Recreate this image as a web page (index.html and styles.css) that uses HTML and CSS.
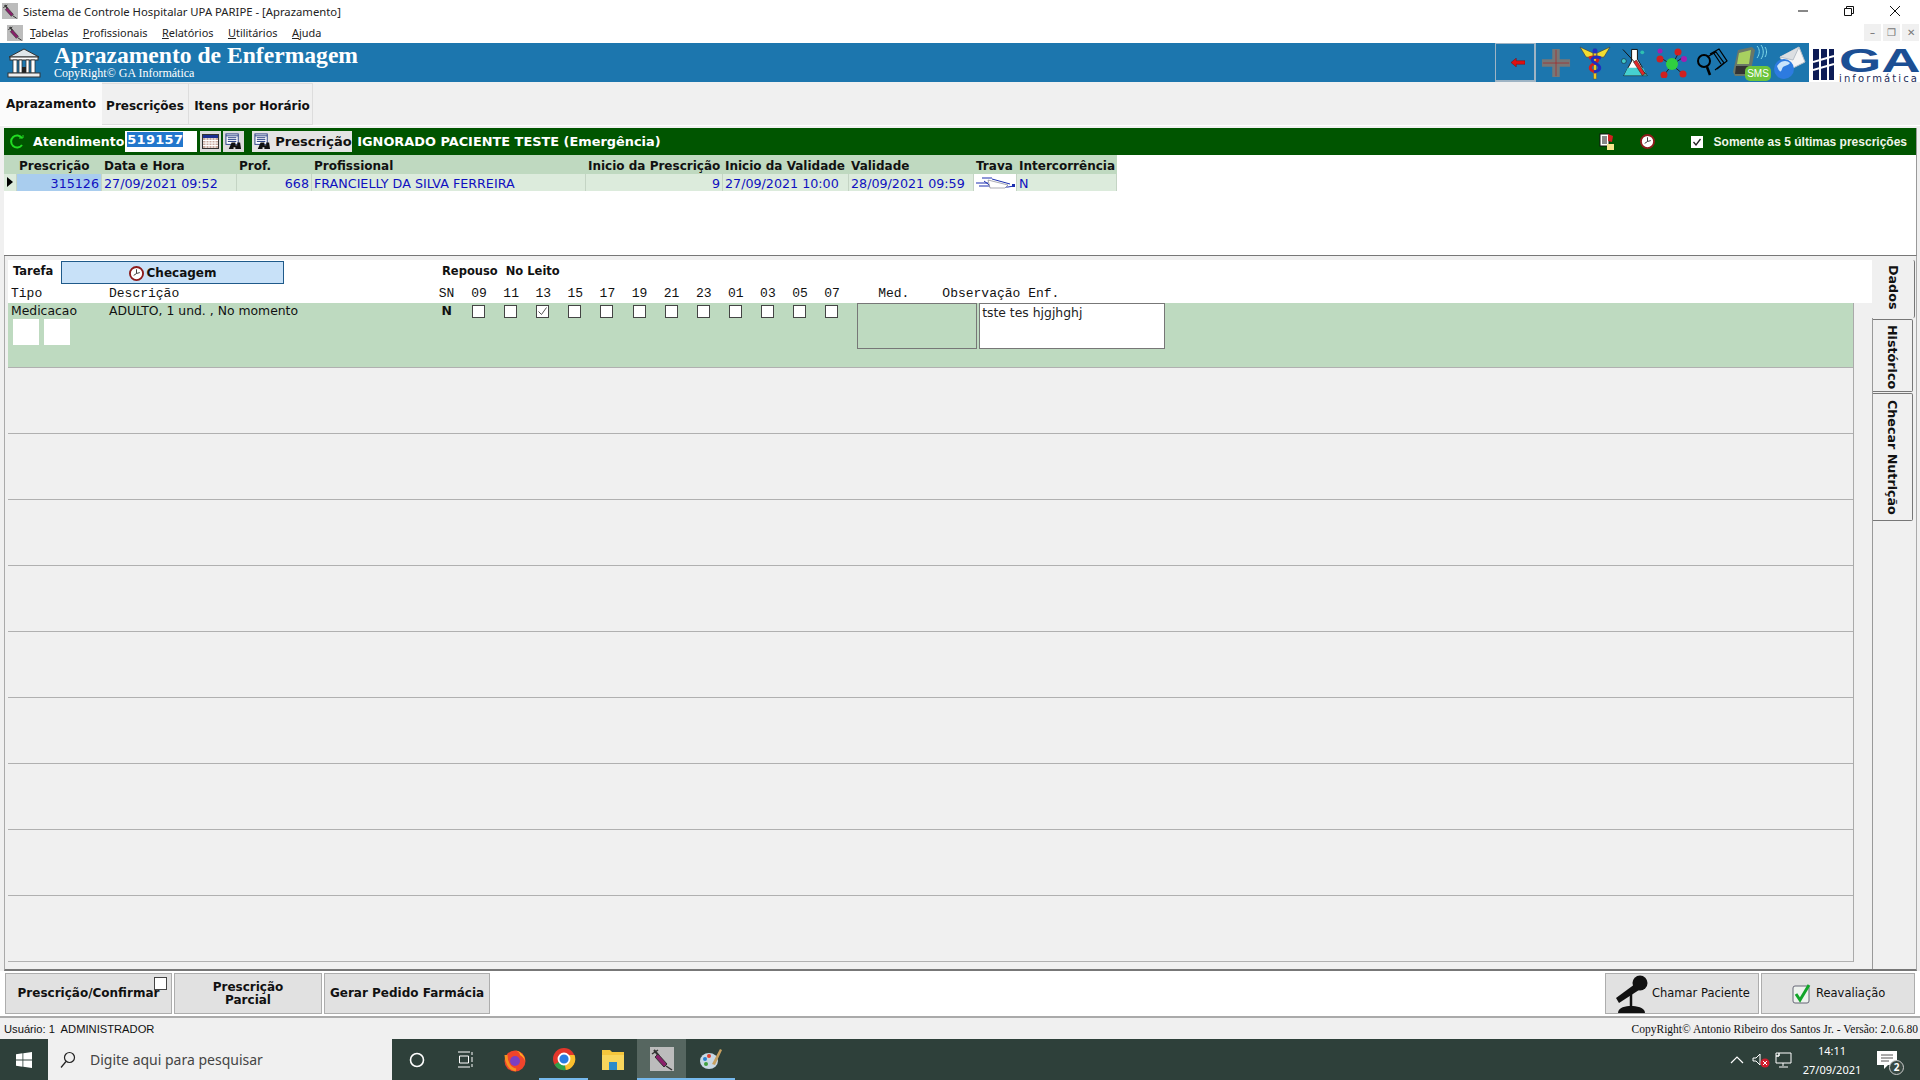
FILE: index.html
```html
<!DOCTYPE html>
<html>
<head>
  <title>Sistema de Controle Hospitalar UPA PARIPE - [Aprazamento]</title>
  <meta charset="UTF-8">
  <link rel="stylesheet" href="styles.css">
</head>
<body>
  <svg class="hidden" width="0" height="0">
    <defs>
      <symbol id="syringe" viewBox="0 0 24 24">
        <rect width="24" height="24" fill="#bcbcbc"/>
        <path d="M4 3l5 6" stroke="#333" stroke-width="2"/>
        <path d="M2 7l6-4" stroke="#333" stroke-width="1.5"/>
        <path d="M8 7l9 10-3 3-9-10z" fill="#8a1f6a" stroke="#333"/>
        <path d="M16 19l6 4" stroke="#333" stroke-width="1.5"/>
      </symbol>
      <symbol id="clock" viewBox="0 0 16 16">
        <circle cx="8" cy="8" r="7" fill="#fff" stroke="#8c1c1c" stroke-width="2"/>
        <path d="M8 3.500V8l-3 2M8 8l3.500-1" stroke="#333" stroke-width="1" fill="none"/>
      </symbol>
      <symbol id="binoc" viewBox="0 0 18 18">
        <rect x="1" y="1" width="13" height="11" fill="#fff" stroke="#223a80"/>
        <path d="M1 3h13M3 5h9M3 7h9M3 9h9" stroke="#223a80"/>
        <path d="M7 10h4v3h2v-3h3l1 7h-6v-2H9v2H4z" fill="#111"/>
      </symbol>
    </defs>
  </svg>

  <div class="title-bar">
    <svg class="app-icon" width="16" height="16"><use href="#syringe"/></svg>
    <span class="title-text">Sistema de Controle Hospitalar UPA PARIPE - [Aprazamento]</span>
    <div class="win-btns">
      <svg width="46" height="20" viewBox="0 0 46 20"><path d="M18 10h10" stroke="#111"/></svg>
      <svg width="46" height="20" viewBox="0 0 46 20"><path d="M18.500 7.500h7v7h-7zM20.500 7.500v-2h7v7h-2" stroke="#111" fill="none"/></svg>
      <svg width="46" height="20" viewBox="0 0 46 20"><path d="M18 5l10 10M28 5L18 15" stroke="#111"/></svg>
    </div>
  </div>

  <div class="menu-bar">
    <svg class="menu-icon" width="16" height="16"><use href="#syringe"/></svg>
    <span><u>T</u>abelas</span>
    <span><u>P</u>rofissionais</span>
    <span><u>R</u>elatórios</span>
    <span><u>U</u>tilitários</span>
    <span><u>A</u>juda</span>
    <div class="mdi-btns">
      <span class="mdi-btn">&#8211;</span>
      <span class="mdi-btn">&#10064;</span>
      <span class="mdi-btn">&#10005;</span>
    </div>
  </div>

  <header class="blue-head">
    <svg class="bank-icon" width="34" height="32" viewBox="0 0 34 32">
      <path d="M2 10L17 2l15 8z" fill="#dfe6ea" stroke="#333"/>
      <rect x="3" y="10" width="28" height="3" fill="#fff" stroke="#333"/>
      <path d="M6 13h4v13H6zM12 13h3v13h-3zM19 13h3v13h-3zM24 13h4v13h-4z" fill="#fff" stroke="#333" stroke-width=".8"/>
      <rect x="15" y="20" width="4" height="6" fill="#222"/>
      <rect x="1" y="26" width="32" height="4" fill="#eee" stroke="#333"/>
    </svg>
    <div class="head-titles">
      <div class="head-main">Aprazamento de Enfermagem</div>
      <div class="head-sub">CopyRight© GA Informática</div>
    </div>
    <div class="head-tools">
      <div class="back-btn">
        <svg width="14" height="9" viewBox="0 0 16 10"><path d="M0 5l6-5v3h10v4H6v3z" fill="#e01010" stroke="#700" stroke-width=".5"/></svg>
      </div>
      <svg class="tool gap-7" width="30" height="30" viewBox="0 0 32 32"><path d="M12 1h8v11h11v8H20v11h-8V20H1v-8h11z" fill="#777"/><path d="M16 2v28M2 16h28" stroke="#b02020" stroke-width=".7"/></svg>
      <svg class="tool gap-7" width="34" height="34" viewBox="0 0 34 34">
        <path d="M15 7L2 1l6 10 7 1zM19 7l13-6-6 10-7 1z" fill="#f2dd30" stroke="#444" stroke-width=".7"/>
        <rect x="15.500" y="3" width="3" height="30" fill="#f0c820" stroke="#444" stroke-width=".4"/>
        <circle cx="17" cy="5" r="2.500" fill="#2030c0"/>
        <path d="M11 12c8-3 12 2 6 5s-7 7 1 9" fill="none" stroke="#d02020" stroke-width="3"/>
        <path d="M23 12c-8-3-12 2-6 5s7 7-1 9" fill="none" stroke="#1c2fc0" stroke-width="3"/>
      </svg>
      <svg class="tool gap-6" width="31" height="34" viewBox="0 0 32 34">
        <path d="M13 3h6v10l10 17H5L13 15z" fill="#fff" stroke="#111"/>
        <path d="M9 22h16l4 8H5z" fill="#46d0d0"/>
        <path d="M4 3l24 26" stroke="#111" stroke-width="1"/>
        <path d="M18 14l9 14-3 2-9-14z" fill="#e02828" stroke="#111" stroke-width=".5"/>
        <circle cx="24" cy="6" r="2" fill="#2ec0b0"/><circle cx="5" cy="15" r="2.500" fill="#40c8c8" stroke="#111" stroke-width=".5"/>
      </svg>
      <svg class="tool gap-7" width="32" height="30" viewBox="0 0 32 30">
        <path d="M5 10l11 7M22 6l-6 11M16 17l11 9M8 27l8-10M26 10l-10 7" stroke="#222"/>
        <circle cx="16" cy="16" r="6" fill="#30d040"/>
        <circle cx="4" cy="11" r="3.500" fill="#d02020"/><circle cx="22" cy="4" r="3.500" fill="#d02020"/>
        <circle cx="27" cy="26" r="3.500" fill="#d02020"/><circle cx="8" cy="27" r="3.500" fill="#d02020"/>
        <circle cx="28" cy="11" r="3" fill="#a020b0"/><circle cx="4" cy="3" r="2.500" fill="#a020b0"/>
      </svg>
      <svg class="tool gap-4" width="33" height="30" viewBox="0 0 33 30">
        <path d="M15 6l9-5 8 12-10 8M12 9l9-5 8 11-9 7M18 4l8 12" fill="none" stroke="#000" stroke-width="1.200"/>
        <circle cx="9" cy="13" r="6" fill="none" stroke="#000" stroke-width="2"/>
        <path d="M12 19l3 8" stroke="#000" stroke-width="2.500"/>
      </svg>
      <svg class="tool gap-2" width="39" height="38" viewBox="0 0 39 38">
        <path d="M6 6l14-3 3 3-5 26H3L1 28z" fill="#6a7768"/>
        <path d="M7 9l12-3-2 14H5z" fill="#a8d060"/>
        <path d="M4 22h13v8H3z" fill="#333"/>
        <path d="M25 2c3 3 3 8 0 12M29 1c3 4 3 10 0 14M33 3c2 3 2 7 0 10" fill="none" stroke="#7fd8e8"/>
        <rect x="13" y="22" width="26" height="15" rx="5" fill="#6cc43c"/>
        <text x="26" y="33" class="sms-label" text-anchor="middle">SMS</text>
      </svg>
      <svg class="tool gap-3" width="33" height="34" viewBox="0 0 33 34">
        <path d="M7 11L26 1l6 15-18 9z" fill="#f4f4f4" stroke="#b8c0c8"/>
        <path d="M7 11l13 3L26 1" fill="#dcdfe2" stroke="#b8c0c8"/>
        <circle cx="11" cy="23" r="10" fill="#2d7be0"/>
        <path d="M4 20c4-6 10-6 13-3-2 3-7 2-8 6s-3 3-5-3z" fill="#c9e4fb"/>
      </svg>
      <div class="ga-logo">
        <svg width="22" height="34" viewBox="0 0 22 34">
          <rect x="0" y="3" width="6" height="31" fill="#0d1c56"/>
          <rect x="8" y="3" width="6" height="31" fill="#0d1c56"/>
          <rect x="16" y="3" width="5" height="31" fill="#0d1c56"/>
          <path d="M0 16l21-6M0 24l21-6" stroke="#fff" stroke-width="2"/>
        </svg>
        <div class="ga-text">
          <div class="ga-mark">GA</div>
          <div class="ga-info">informática</div>
        </div>
      </div>
    </div>
  </header>

  <nav class="tabs">
    <div class="tab tab-on">Aprazamento</div>
    <div class="tab tab-prescr">Prescrições</div>
    <div class="tab tab-itens">Itens por Horário</div>
  </nav>

  <section class="frame">
    <div class="green-bar">
      <svg class="refresh" width="15" height="15" viewBox="0 0 15 15"><path d="M13 4A6 6 0 1 0 13 11" fill="none" stroke="#22dd22" stroke-width="2"/><path d="M10 4h4V1" fill="none" stroke="#22dd22"/></svg>
      <span class="atend-label">Atendimento</span>
      <span class="atend-input"><span class="selected">519157</span></span>
      <span class="icon-btn cal-btn">
        <svg width="17" height="15" viewBox="0 0 17 15"><rect x=".5" y=".5" width="16" height="14" fill="#c9a9a0" stroke="#333"/><rect x="1" y="1" width="15" height="3" fill="#1c2f90"/><path d="M1 6.500h15M1 9h15M1 11.500h15M4 4v10M7 4v10M10 4v10M13 4v10" stroke="#fff"/></svg>
      </span>
      <span class="icon-btn binoc-btn"><svg width="17" height="17"><use href="#binoc"/></svg></span>
      <span class="prescr-btn"><svg width="17" height="17"><use href="#binoc"/></svg>Prescrição</span>
      <span class="patient">IGNORADO PACIENTE TESTE (Emergência)</span>
      <div class="bar-right">
        <svg class="doc-icon" width="16" height="17" viewBox="0 0 16 17">
          <rect x="1" y="1" width="9" height="12" fill="#fff" stroke="#111"/>
          <path d="M3 4h5M3 6h5M3 8h5M3 10h5" stroke="#111"/>
          <path d="M9 1l5 2-1 6-4-1z" fill="#d02020"/>
          <rect x="8" y="11" width="7" height="6" fill="#f5e58c"/>
        </svg>
        <svg class="bar-clock" width="15" height="15"><use href="#clock"/></svg>
        <span class="only-check">
          <svg width="12" height="12" viewBox="0 0 12 12"><rect width="12" height="12" fill="#fff"/><path d="M2.500 6l2.500 3 4.500-6" fill="none" stroke="#222" stroke-width="1.300"/></svg>
        </span>
        <span class="only-label">Somente as 5 últimas prescrições</span>
      </div>
    </div>

    <div class="presc-grid">
      <div class="pg-row pg-head">
        <span></span><span class="ind-head">Prescrição</span><span>Data e Hora</span><span>Prof.</span><span>Profissional</span>
        <span class="narrow">Inicio da Prescrição</span><span class="narrow">Inicio da Validade</span><span class="narrow">Validade</span><span class="narrow">Trava</span><span class="narrow">Intercorrência</span>
      </div>
      <div class="pg-row pg-data">
        <span class="pointer"></span><span class="num sel-cell">315126</span><span>27/09/2021 09:52</span><span class="num">668</span><span>FRANCIELLY DA SILVA FERREIRA</span>
        <span class="num">9</span><span>27/09/2021 10:00</span><span>28/09/2021 09:59</span>
        <span class="trava-cell">
          <svg width="42" height="15" viewBox="0 0 42 15"><path d="M2 8h12M8 3h10M5 11h14M10 6l8 6h16l6-1M18 4l18 5" stroke="#1c2fb0" fill="none"/><path d="M14 5l20 5-3 3H16z" fill="#fff" stroke="#556" stroke-width=".5"/><rect x="38" y="9" width="3" height="3" fill="#1c2fb0"/></svg>
        </span>
        <span>N</span>
      </div>
    </div>
  </section>

  <section class="work">
    <div class="work-main">
      <div class="task-head">
        <div class="task-line">
          <span class="task-label">Tarefa</span>
          <span class="check-btn"><svg width="15" height="15"><use href="#clock"/></svg>Checagem</span>
          <span class="rep-label">Repouso</span>
          <span class="leito-label">No Leito</span>
        </div>
        <div class="col-line row-grid">
          <span>Tipo</span><span>Descrição</span><span class="center">SN</span>
          <span class="center">09</span><span class="center">11</span><span class="center">13</span><span class="center">15</span><span class="center">17</span><span class="center">19</span><span class="center">21</span><span class="center">23</span><span class="center">01</span><span class="center">03</span><span class="center">05</span><span class="center">07</span>
          <span class="med-head">Med.</span><span class="obs-head">Observação Enf.</span>
        </div>
      </div>

      <div class="rows">
        <div class="item row-grid item-on">
          <div class="tipo">Medicacao
            <div class="white-boxes"><span></span><span></span></div>
          </div>
          <div>ADULTO, 1 und. , No momento</div>
          <div class="center sn">N</div>
          <div class="center"><span class="chk"></span></div>
          <div class="center"><span class="chk"></span></div>
          <div class="center"><span class="chk chk-on"><svg width="11" height="11" viewBox="0 0 11 11"><path d="M1.500 5.500l3 3 5-7" fill="none" stroke="#555"/></svg></span></div>
          <div class="center"><span class="chk"></span></div>
          <div class="center"><span class="chk"></span></div>
          <div class="center"><span class="chk"></span></div>
          <div class="center"><span class="chk"></span></div>
          <div class="center"><span class="chk"></span></div>
          <div class="center"><span class="chk"></span></div>
          <div class="center"><span class="chk"></span></div>
          <div class="center"><span class="chk"></span></div>
          <div class="center"><span class="chk"></span></div>
          <div class="med-box"></div>
          <div class="obs-box">tste tes hjgjhghj</div>
        </div>
        <div class="item"></div>
        <div class="item"></div>
        <div class="item"></div>
        <div class="item"></div>
        <div class="item"></div>
        <div class="item"></div>
        <div class="item"></div>
        <div class="item"></div>
        <div class="item"></div>
      </div>
    </div>

    <aside class="side-tabs">
      <div class="side-tab side-on"><span>Dados</span></div>
      <div class="side-tab side-hist"><span>Histórico</span></div>
      <div class="side-tab side-nutri"><span>Checar Nutrição</span></div>
    </aside>
  </section>

  <section class="actions">
    <button class="act act-confirm">Prescrição/Confirmar<span class="mini-chk"></span></button>
    <button class="act act-parcial">Prescrição<br>Parcial</button>
    <button class="act act-pedido">Gerar Pedido Farmácia</button>
    <button class="act act-plain act-chamar">
      <svg width="34" height="39" viewBox="0 0 34 39">
        <path d="M1 24l19-14 4 6L4 29z" fill="#111"/>
        <circle cx="25" cy="9" r="7.500" fill="#111"/>
        <path d="M16 20v13" stroke="#111" stroke-width="2.500"/>
        <path d="M3 39c0-6 8-7 13-7s14 1 14 7z" fill="#111"/>
      </svg>
      <span>Chamar Paciente</span>
    </button>
    <button class="act act-plain act-reav">
      <svg width="22" height="22" viewBox="0 0 22 22">
        <rect x="2" y="3" width="16" height="17" rx="2" fill="#eef2ee" stroke="#667"/>
        <path d="M5 11l4 6 9-15" fill="none" stroke="#12a52a" stroke-width="3"/>
      </svg>
      <span>Reavaliação</span>
    </button>
  </section>

  <footer class="status">
    <span class="status-user">Usuário: 1&nbsp; ADMINISTRADOR</span>
    <span class="status-copy">CopyRight© Antonio Ribeiro dos Santos Jr. - Versão: 2.0.6.80</span>
  </footer>

  <div class="taskbar">
    <svg class="win-logo" width="16" height="16" viewBox="0 0 16 16"><path d="M0 2.200l6.500-.9v6.300H0zM7.300 1.200L16 0v7.600H7.300zM0 8.400h6.500v6.300L0 13.800zM7.300 8.400H16V16l-8.700-1.200z" fill="#fff"/></svg>
    <div class="search-box">
      <svg width="17" height="17" viewBox="0 0 17 17"><circle cx="10.500" cy="6.500" r="5" fill="none" stroke="#222" stroke-width="1.200"/><path d="M7 10.500l-5 6" stroke="#222" stroke-width="1.200"/></svg>
      <span>Digite aqui para pesquisar</span>
    </div>
    <div class="task-slot"><svg width="16" height="16" viewBox="0 0 16 16"><circle cx="8" cy="8" r="6.500" fill="none" stroke="#fff" stroke-width="1.600"/></svg></div>
    <div class="task-slot"><svg width="17" height="17" viewBox="0 0 17 17"><path d="M1 1h12M1 16h12M15 1v3M15 6v5M15 13v3M2.500 5h9v7h-9z" fill="none" stroke="#fff"/></svg></div>
    <div class="task-slot"><svg width="24" height="24" viewBox="0 0 24 24"><circle cx="12" cy="13" r="10.500" fill="#f0442c"/><path d="M12 2c6 2 10 6 10 11-1-3-3-5-5-6 0-2-2-4-5-5z" fill="#ffb020"/><circle cx="12" cy="13" r="5" fill="#7b3fc4"/><path d="M3 7c0 6 3 14 10 15" fill="none" stroke="#f89020" stroke-width="3"/></svg></div>
    <div class="task-slot slot-run"><svg width="24" height="24" viewBox="0 0 24 24"><circle cx="12" cy="12" r="11" fill="#e3362b"/><path d="M12 12L2.500 17.500A11 11 0 0 0 14 23z" fill="#2fa14a"/><path d="M12 12l1.800 11A11 11 0 0 0 22.500 8H12z" fill="#fbc02d"/><circle cx="12" cy="12" r="5.500" fill="#2a7de1" stroke="#fff" stroke-width="1.800"/></svg></div>
    <div class="task-slot"><svg width="22" height="22" viewBox="0 0 22 22"><path d="M0 1h8l2 2h12v18H0z" fill="#f5c63c"/><rect x="0" y="6" width="22" height="15" fill="#f9d65c"/><rect x="7" y="13" width="8" height="8" fill="#2c8ac9"/></svg></div>
    <div class="task-slot slot-run slot-active"><svg width="24" height="24"><use href="#syringe"/></svg></div>
    <div class="task-slot slot-run"><svg width="24" height="24" viewBox="0 0 24 24"><ellipse cx="10" cy="14" rx="9" ry="8" fill="#c8d8e4"/><circle cx="6" cy="12" r="2" fill="#2a80d0"/><circle cx="10" cy="9" r="2" fill="#e04030"/><circle cx="7" cy="17" r="2" fill="#40a040"/><path d="M13 17L21 2l2 1-7 15z" fill="#c8a060"/></svg></div>
    <div class="tray">
      <svg width="14" height="8" viewBox="0 0 14 8"><path d="M1 7l6-6 6 6" fill="none" stroke="#fff" stroke-width="1.200"/></svg>
      <svg class="tray-sound" width="18" height="16" viewBox="0 0 18 16"><path d="M1 6h3l4-4v11L4 9H1z" fill="none" stroke="#fff"/><circle cx="13" cy="11" r="4.500" fill="#d01c2c"/><path d="M11 9l4 4M15 9l-4 4" stroke="#fff"/></svg>
      <svg class="tray-net" width="17" height="16" viewBox="0 0 17 16"><path d="M4 1h12v10H1V4h3zM1 1h3v3H1zM8 11v3M4 15h9" fill="none" stroke="#fff"/></svg>
      <div class="clock-text"><div>14:11</div><div>27/09/2021</div></div>
      <div class="notif">
        <svg width="22" height="20" viewBox="0 0 22 20"><path d="M1 1h20v14h-9l-4 4v-4H1z" fill="#fff"/><path d="M5 5h12M5 8h12M5 11h8" stroke="#555"/></svg>
        <span class="notif-count">2</span>
      </div>
    </div>
  </div>
</body>
</html>
```

FILE: styles.css
```css
* {
  box-sizing: border-box;
}
html, body {
  margin: 0;
  padding: 0;
}
body {
  width: 1920px;
  height: 1080px;
  overflow: hidden;
  background-color: #f0f0f0;
  color: #111;
  font-family: "Noto Sans", "Open Sans", sans-serif;
  font-size: 12px;
}
.hidden {
  position: absolute;
}
.center {
  text-align: center;
}

/* window title and menu */
.title-bar {
  height: 22px;
  background-color: #fff;
  display: flex;
  align-items: center;
  padding-left: 2px;
}
.app-icon {
  margin-right: 5px;
}
.title-text {
  font-size: 11.300px;
  color: #222;
}
.win-btns {
  margin-left: auto;
  display: flex;
  margin-right: 2px;
}
.menu-bar {
  height: 21px;
  background-color: #fff;
  display: flex;
  align-items: center;
  padding-left: 7px;
  font-size: 10.900px;
  color: #222;
}
.menu-icon {
  margin-right: 7px;
}
.menu-bar span {
  margin-right: 14.500px;
}
.mdi-btns {
  margin-left: auto;
  display: flex;
  gap: 2px;
  margin-right: 1px;
}
.menu-bar .mdi-btn {
  width: 17px;
  height: 17px;
  margin: 0;
  background-color: #f0f0f0;
  color: #777;
  font-size: 10px;
  text-align: center;
  line-height: 17px;
}

/* blue header */
.blue-head {
  height: 39px;
  background-color: #1c76ae;
  display: flex;
  align-items: center;
  position: relative;
  padding-left: 7px;
}
.bank-icon {
  margin-right: 13px;
}
.head-titles {
  margin-top: -2px;
  color: #fff;
  font-family: "Liberation Serif", serif;
  font-weight: bold;
}
.head-main {
  font-size: 23.600px;
  line-height: 22px;
  margin-bottom: 1px;
}
.head-sub {
  font-size: 12px;
  font-weight: normal;
  line-height: 13px;
}
.head-tools {
  margin-left: auto;
  display: flex;
  align-items: center;
  height: 39px;
}
.tool {
  flex: none;
}
.gap-7 {
  margin-right: 7px;
}
.gap-6 {
  margin-right: 6px;
}
.gap-4 {
  margin-right: 4px;
}
.gap-3 {
  margin-right: 3px;
}
.gap-2 {
  margin-right: 2px;
}
.back-btn {
  width: 41px;
  height: 39px;
  border: 1px solid #9fb4c4;
  border-right-width: 2px;
  border-bottom-width: 2px;
  display: flex;
  align-items: center;
  justify-content: center;
  padding-left: 6px;
  margin-right: 5px;
}
.sms-label {
  font-family: "Liberation Sans", sans-serif;
  font-size: 10px;
  fill: #fff;
}
.ga-logo {
  width: 111px;
  height: 39px;
  background-color: #fff;
  display: flex;
  align-items: flex-start;
  padding: 3px 0 0 4px;
  gap: 4px;
}
.ga-mark {
  font-family: "Liberation Sans", sans-serif;
  font-weight: bold;
  font-size: 34px;
  line-height: 28px;
  height: 27px;
  width: 80px;
  color: #1c4f94;
  transform: scaleX(1.600);
  transform-origin: left;
}
.ga-info {
  font-family: "DejaVu Sans", sans-serif;
  font-size: 10px;
  letter-spacing: 2.100px;
  line-height: 11px;
  white-space: nowrap;
  color: #1d2d5a;
}

/* tabs */
.tabs {
  height: 44px;
  display: flex;
  font-family: "DejaVu Sans", sans-serif;
  font-weight: bold;
  font-size: 12px;
  border-bottom: 1px solid #fff;
}
.tab {
  border: 1px solid #ddd;
  border-left: none;
  margin-top: 1px;
  padding-top: 15px;
  text-align: center;
}
.tab-on {
  width: 102px;
  background-color: #fbfbfb;
  border: none;
  padding-top: 15px;
  margin-top: 0;
}
.tab-prescr {
  width: 87px;
}
.tab-itens {
  width: 124px;
  padding-left: 3px;
}

/* atendimento bar and prescriptions */
.frame {
  margin: 2px 3px 0 4px;
  height: 128px;
  background-color: #fff;
  border-right: 1px solid #999;
  border-bottom: 1px solid #777;
}
.green-bar {
  height: 27px;
  background-color: #005500;
  color: #fff;
  display: flex;
  align-items: center;
  padding-left: 5px;
  font-family: "DejaVu Sans", sans-serif;
  font-weight: bold;
  font-size: 12.500px;
}
.refresh {
  margin-right: 9px;
}
.atend-input {
  width: 72px;
  height: 21px;
  background-color: #fff;
  margin-left: 1px;
  padding: 1px 0 0 2px;
  font-size: 13px;
}
.selected {
  background-color: #2277cc;
  color: #fff;
  letter-spacing: .3px;
}
.icon-btn {
  width: 21px;
  height: 21px;
  background-color: #dcdcdc;
  display: flex;
  align-items: center;
  justify-content: center;
}
.cal-btn {
  margin-left: 3px;
}
.binoc-btn {
  margin-left: 2px;
}
.prescr-btn {
  width: 100px;
  height: 21px;
  margin-left: 8px;
  background-color: #e4e4e4;
  color: #111;
  display: flex;
  align-items: center;
  gap: 4px;
  padding-left: 2px;
  font-size: 13px;
}
.patient {
  margin-left: 5px;
  font-size: 12.900px;
}
.bar-right {
  margin-left: auto;
  display: flex;
  align-items: center;
  padding-right: 9px;
}
.bar-clock {
  margin-left: 25px;
}
.only-check {
  margin-left: 36px;
  display: flex;
}
.only-label {
  margin-left: 11px;
  font-family: "Liberation Sans", sans-serif;
  font-size: 12px;
  color: #f0f6ea;
}
.presc-grid {
  font-family: "DejaVu Sans", sans-serif;
  font-size: 12.700px;
  width: 1113px;
}
.pg-row {
  display: grid;
  grid-template-columns: 13px 85px 135px 75px 274px 137px 126px 125px 43px 100px;
}
.pg-row > span {
  white-space: nowrap;
  overflow: hidden;
  padding: 0 2px;
}
.pg-head {
  height: 19px;
  background-color: #bfd9c0;
  font-weight: bold;
  line-height: 22px;
  font-size: 12px;
}
.pg-head .narrow {
  overflow: visible;
}
.pg-data {
  height: 17px;
  background-color: #dcebdc;
  color: #1010c0;
  line-height: 19px;
}
.pg-data > span {
  border-right: 1px solid #c4d4c4;
}
.num {
  text-align: right;
}
.sel-cell {
  background-color: #a9cdee;
}
.pg-data .pointer {
  position: relative;
}
.pointer::after {
  content: "";
  position: absolute;
  left: 3px;
  top: 3px;
  border-left: 6px solid #000;
  border-top: 5px solid transparent;
  border-bottom: 5px solid transparent;
}
.pg-data .trava-cell {
  padding: 0;
  background-color: #fff;
}
.trava-cell svg {
  display: block;
  margin-top: 1px;
}

/* main task area */
.work {
  height: 715px;
  display: flex;
  margin-left: 4px;
  margin-right: 3px;
  border-bottom: 2px solid #777;
  padding-top: 4px;
  border-left: 1px solid #aaa;
  border-right: 1px solid #aaa;
}
.work-main {
  width: 1867px;
  display: flex;
  flex-direction: column;
}
.task-head {
  height: 43px;
  margin-left: 3px;
  background-color: #fff;
}
.task-line {
  height: 25px;
  display: flex;
  font-family: "DejaVu Sans", sans-serif;
  font-weight: bold;
  font-size: 11.500px;
  padding-left: 5px;
  line-height: 23px;
}
.task-label {
  width: 48px;
}
.check-btn {
  width: 223px;
  height: 23px;
  margin-top: 1px;
  padding-top: 2px;
  background-color: #c8e1f8;
  border: 1px solid #1f5a8a;
  display: flex;
  align-items: center;
  justify-content: center;
  gap: 3px;
  font-size: 12px;
}
.rep-label {
  margin-left: 158px;
}
.leito-label {
  margin-left: 8px;
}
.row-grid {
  display: grid;
  grid-template-columns: 98px 322px 31.500px repeat(12, 32.100px) 9.500px 122px 186px;
}
.col-line {
  height: 18px;
  font-family: "Liberation Mono", monospace;
  font-size: 13px;
  line-height: 17px;
  padding-left: 3px;
  grid-template-columns: 98px 322px 33px repeat(12, 32.100px) auto auto 1fr;
}
.col-line .center {
  position: relative;
  left: -1px;
}
.med-head {
  margin-left: 29px;
}
.obs-head {
  margin-left: 33px;
}
.rows {
  margin-left: 3px;
  width: 1846px;
  border-right: 1px solid #aaa;
}
.item {
  height: 66px;
  border-bottom: 1px solid #b0b0b0;
  font-family: "DejaVu Sans", sans-serif;
  font-size: 12.400px;
}
.item-on {
  height: 65px;
  background-color: #bedac0;
  padding-left: 3px;
  line-height: 15px;
}
.white-boxes {
  display: flex;
  gap: 5px;
  margin: 1px 0 0 2px;
}
.white-boxes span {
  width: 26px;
  height: 26px;
  background-color: #fff;
}
.sn {
  font-weight: bold;
}
.chk {
  display: inline-flex;
  width: 13px;
  height: 13px;
  margin-top: 2px;
  background-color: #fff;
  border: 1px solid #444;
  vertical-align: top;
}
.med-box {
  grid-column: 17;
  width: 120px;
  height: 46px;
  border: 1px solid #777;
  background-color: #bedac0;
}
.obs-box {
  grid-column: 18;
  height: 46px;
  margin-left: 0;
  background-color: #fff;
  border: 1px solid #777;
  padding: 1px 2px;
  color: #222;
}

/* right side tabs */
.side-tabs {
  flex: 1;
  position: relative;
  border-left: 1px solid #999;
}
.side-tab {
  position: absolute;
  background-color: #f0f0f0;
  font-family: "DejaVu Sans", sans-serif;
  font-weight: bold;
  font-size: 12.700px;
  border: 1px solid #777;
  border-left: none;
  border-radius: 0 2px 2px 0;
  display: flex;
  justify-content: center;
  padding-top: 5px;
}
.side-tab span {
  writing-mode: vertical-rl;
}
.side-on {
  left: -1px;
  top: 0;
  width: 43px;
  height: 58px;
  border-top: none;
  border-bottom: none;
}
.side-hist {
  left: 0;
  top: 59px;
  width: 40px;
  height: 73px;
}
.side-nutri {
  left: 0;
  top: 133px;
  width: 40px;
  height: 128px;
  padding-top: 6px;
}

/* bottom buttons */
.actions {
  height: 47px;
  background-color: #fff;
  display: flex;
  gap: 2px;
  padding: 2px 5px 5px 5px;
  border-bottom: 2px solid #aaa;
}
.act {
  position: relative;
  height: 41px;
  padding: 0;
  background-color: #e1e1e1;
  border: 1px solid #adadad;
  font-family: "DejaVu Sans", sans-serif;
  font-weight: bold;
  font-size: 12px;
  line-height: 13px;
  color: #111;
}
.act-confirm {
  width: 167px;
}
.act-parcial {
  width: 148px;
}
.act-pedido {
  width: 166px;
}
.mini-chk {
  position: absolute;
  top: 3px;
  right: 4px;
  width: 13px;
  height: 13px;
  background-color: #fff;
  border: 1px solid #444;
}
.act-plain {
  width: 154px;
  display: flex;
  align-items: center;
  font-weight: normal;
  font-size: 11.500px;
  white-space: nowrap;
}
.act-chamar {
  margin-left: auto;
  gap: 3px;
  padding-left: 9px;
  align-items: flex-end;
}
.act-chamar span {
  margin-bottom: 13px;
}
.act-reav {
  gap: 3px;
  padding-left: 29px;
}

/* status bar */
.status {
  height: 21px;
  display: flex;
  justify-content: space-between;
  align-items: center;
  padding: 1px 2px 0 4px;
  background-color: #f0f0f0;
}
.status-user {
  font-family: "Liberation Sans", sans-serif;
  font-size: 11.200px;
}
.status-copy {
  font-family: "Liberation Serif", serif;
  font-size: 11.500px;
}

/* windows taskbar */
.taskbar {
  height: 41px;
  background-color: #2e403a;
  display: flex;
  align-items: center;
  color: #fff;
}
.win-logo {
  margin: 0 16px 0 16px;
}
.search-box {
  width: 344px;
  height: 41px;
  background-color: #f0f0f0;
  color: #444;
  display: flex;
  align-items: center;
  gap: 14px;
  padding-left: 11px;
  font-size: 14px;
  margin-right: 0;
}
.task-slot {
  width: 49px;
  height: 41px;
  display: flex;
  align-items: center;
  justify-content: center;
}
.slot-run {
  border-bottom: 2px solid #76b9ed;
}
.slot-active {
  background-color: #566660;
}
.tray {
  margin-left: auto;
  display: flex;
  align-items: center;
  height: 41px;
  padding-right: 22px;
}
.tray-sound {
  margin-left: 8px;
}
.tray-net {
  margin-left: 5px;
}
.clock-text {
  width: 80px;
  margin-left: 0;
  text-align: center;
  font-size: 11px;
  line-height: 19px;
}
.notif {
  position: relative;
  margin-left: 4px;
  display: flex;
}
.notif-count {
  position: absolute;
  right: -6px;
  bottom: -5px;
  width: 15px;
  height: 15px;
  border-radius: 50%;
  background-color: #3a4a44;
  border: 1px solid #ccc;
  font-size: 10px;
  font-weight: bold;
  line-height: 13px;
  text-align: center;
}
```
